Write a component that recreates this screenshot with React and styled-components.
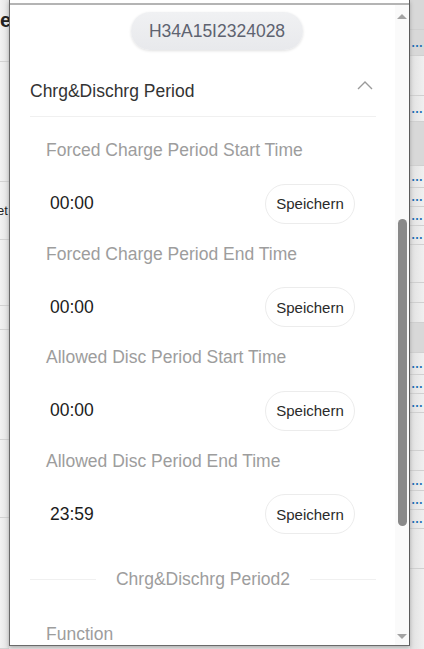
import React from "react";
import styled, { createGlobalStyle } from "styled-components";

const GlobalStyle = createGlobalStyle`
  html, body {
    margin: 0;
    padding: 0;
    overflow: hidden;
    background: #ececec;
    font-family: "Liberation Sans", Arial, sans-serif;
  }
`;

const fields = [
  { label: "Forced Charge Period Start Time", value: "00:00" },
  { label: "Forced Charge Period End Time", value: "00:00" },
  { label: "Allowed Disc Period Start Time", value: "00:00" },
  { label: "Allowed Disc Period End Time", value: "23:59" },
];

const leftRows = [
  { h: 62, text: "e", bold: true },
  { h: 120 },
  { h: 58, text: "et" },
  { h: 66 },
  { h: 24 },
  { h: 110 },
  { h: 78 },
  { h: 131 },
];

const rightRows = [
  { h: 30, shade: true },
  { h: 26, dots: true, shade: true },
  { h: 40 },
  { h: 26, dots: true },
  { h: 44, shade: true },
  { h: 22, dots: true },
  { h: 19, dots: true },
  { h: 19, dots: true },
  { h: 19, dots: true },
  { h: 38 },
  { h: 20 },
  { h: 20 },
  { h: 30, shade: true },
  { h: 22, dots: true },
  { h: 19, dots: true },
  { h: 19, dots: true },
  { h: 38 },
  { h: 20 },
  { h: 20, dots: true },
  { h: 19, dots: true },
  { h: 19, dots: true },
  { h: 40 },
];

const App = () => {
  return (
    <>
      <GlobalStyle />
      <Page>
        <LeftStrip>
          {leftRows.map((r, i) => (
            <LeftRow key={i} $h={r.h} $bold={r.bold}>
              {r.text}
            </LeftRow>
          ))}
        </LeftStrip>

        <Modal>
          <TopLine />
          <Body>
            <Content>
              <SerialRow>
                <SerialPill>H34A15I2324028</SerialPill>
              </SerialRow>

              <SectionHeader>
                <SectionTitle>Chrg&amp;Dischrg Period</SectionTitle>
                <svg width="16" height="10" viewBox="0 0 16 10">
                  <polyline
                    points="1,9 8,2 15,9"
                    fill="none"
                    stroke="#9a9a9a"
                    strokeWidth="1.4"
                  />
                </svg>
              </SectionHeader>

              <Fields>
                {fields.map((f) => (
                  <Field key={f.label}>
                    <FieldLabel>{f.label}</FieldLabel>
                    <ValueRow>
                      <TimeValue>{f.value}</TimeValue>
                      <SaveButton>Speichern</SaveButton>
                    </ValueRow>
                  </Field>
                ))}
              </Fields>

              <SubSection>
                <Rule />
                <SubTitle>Chrg&amp;Dischrg Period2</SubTitle>
                <Rule />
              </SubSection>

              <NextField>
                <FieldLabel>Function</FieldLabel>
              </NextField>
            </Content>

            <Scrollbar>
              <Arrow $up />
              <Track>
                <Thumb />
              </Track>
              <Arrow />
            </Scrollbar>
          </Body>
        </Modal>

        <RightStrip>
          {rightRows.map((r, i) => (
            <RightRow key={i} $h={r.h} $shade={r.shade}>
              {r.dots && <Dots>…</Dots>}
            </RightRow>
          ))}
        </RightStrip>
      </Page>
    </>
  );
};

export default App;

const Page = styled.div`
  display: flex;
  width: 424px;
  height: 649px;
  overflow: hidden;
`;

const LeftStrip = styled.div`
  width: 9px;
  flex-shrink: 0;
  display: flex;
  flex-direction: column;
  background: linear-gradient(90deg, #f2f2f2, #e2e2e2);
  overflow: hidden;
`;

const LeftRow = styled.div`
  height: ${(p) => p.$h}px;
  flex-shrink: 0;
  border-bottom: 1px solid #d2d2d2;
  font-size: ${(p) => (p.$bold ? 20 : 13)}px;
  font-weight: ${(p) => (p.$bold ? 700 : 400)};
  color: #222;
  white-space: nowrap;
  display: flex;
  align-items: center;
  margin-left: ${(p) => (p.$bold ? 0 : -3)}px;
  padding-bottom: ${(p) => (p.$bold ? 20 : 0)}px;
  box-sizing: border-box;
`;

const Modal = styled.div`
  width: 401px;
  height: 646px;
  flex-shrink: 0;
  display: flex;
  flex-direction: column;
  background: #fff;
  border-left: 1px solid #6a6a6a;
  border-right: 1px solid #5a5a5a;
  border-bottom: 1px solid #6a6a6a;
  box-sizing: border-box;
  box-shadow: 0 2px 4px rgba(0, 0, 0, 0.25);
  padding-top: 3px;
  z-index: 1;
`;

const TopLine = styled.div`
  height: 2px;
  background: #b4b4b4;
  flex-shrink: 0;
`;

const Body = styled.div`
  flex: 1;
  display: flex;
  min-height: 0;
`;

const Content = styled.div`
  flex: 1;
  padding: 7px 19px 0 20px;
  overflow: hidden;
`;

const SerialRow = styled.div`
  display: flex;
  justify-content: center;
  padding-left: 28px;
`;

const SerialPill = styled.div`
  height: 38px;
  line-height: 38px;
  padding: 0 18px;
  border-radius: 19px;
  background: linear-gradient(#f0f1f3, #e8e9ec);
  box-shadow: 0 1px 3px rgba(0, 0, 0, 0.12);
  color: #5e6370;
  font-size: 17.5px;
`;

const SectionHeader = styled.div`
  margin-top: 16px;
  height: 50px;
  display: flex;
  align-items: center;
  justify-content: space-between;
  border-bottom: 1px solid #f0f0f0;
  padding-right: 3px;

  svg {
    margin-top: -12px;
  }
`;

const SectionTitle = styled.div`
  font-size: 17.5px;
  color: #333;
`;

const Fields = styled.div`
  padding: 13px 21px 0 16px;
`;

const Field = styled.div`
  display: flex;
  flex-direction: column;
`;

const FieldLabel = styled.div`
  height: 40px;
  line-height: 40px;
  font-size: 17.5px;
  color: #9d9d9d;
  white-space: nowrap;
`;

const ValueRow = styled.div`
  height: 63.5px;
  display: flex;
  align-items: center;
  justify-content: space-between;
  padding-left: 4px;
  padding-top: 4px;
  box-sizing: border-box;
`;

const TimeValue = styled.div`
  font-size: 17.5px;
  color: #1c1c1c;
`;

const SaveButton = styled.button`
  width: 90px;
  height: 40px;
  border: 1px solid #ececec;
  border-radius: 20px;
  background: #fff;
  font-family: "Liberation Sans", Arial, sans-serif;
  font-size: 15px;
  color: #2a2a2a;
  padding: 0;
  cursor: pointer;
`;

const SubSection = styled.div`
  margin-top: 17px;
  height: 36px;
  display: flex;
  align-items: center;
  gap: 20px;
`;

const Rule = styled.div`
  flex: 1;
  height: 1px;
  background: #f0f0f0;
`;

const SubTitle = styled.div`
  font-size: 17.5px;
  color: #9d9d9d;
  white-space: nowrap;
`;

const NextField = styled.div`
  padding: 17px 21px 0 16px;
`;

const Scrollbar = styled.div`
  width: 14px;
  flex-shrink: 0;
  display: flex;
  flex-direction: column;
  align-items: center;
  background: #fafafa;
  padding: 9px 0 6px;
  box-sizing: border-box;
`;

const Arrow = styled.div`
  width: 0;
  height: 0;
  border-left: 5px solid transparent;
  border-right: 5px solid transparent;
  ${(p) =>
    p.$up
      ? "border-bottom: 5px solid #a3a3a3;"
      : "border-top: 5px solid #a3a3a3;"}
  flex-shrink: 0;
`;

const Track = styled.div`
  flex: 1;
  width: 100%;
  display: flex;
  justify-content: center;
  padding-top: 200px;
`;

const Thumb = styled.div`
  width: 9px;
  height: 307px;
  border-radius: 5px;
  background: #898989;
`;

const RightStrip = styled.div`
  flex: 1;
  display: flex;
  flex-direction: column;
  background: linear-gradient(90deg, #e0e0e0, #f0f0f0);
  overflow: hidden;
`;

const RightRow = styled.div`
  height: ${(p) => p.$h}px;
  flex-shrink: 0;
  border-bottom: 1px solid #d0d0d0;
  background: ${(p) => (p.$shade ? "#d8d8d8" : "transparent")};
  display: flex;
  align-items: center;
  box-sizing: border-box;
`;

const Dots = styled.span`
  color: #1f6fb5;
  font-size: 12px;
  font-weight: 700;
  letter-spacing: -1px;
  margin-left: 1px;
`;
